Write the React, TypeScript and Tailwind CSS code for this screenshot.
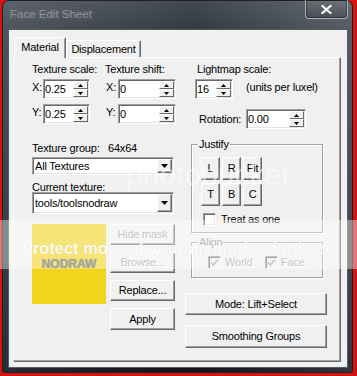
import React from "react";

const raised =
  "border border-t-white border-l-white border-r-[#696969] border-b-[#696969] shadow-[inset_-1px_-1px_0_#a0a0a0] bg-[#f0f0f0]";
const raisedSmall = "border border-t-white border-l-white border-r-[#696969] border-b-[#696969] bg-[#f0f0f0]";
const sunken =
  "border border-t-[#a0a0a0] border-l-[#a0a0a0] border-r-white border-b-white shadow-[inset_1px_1px_0_#696969,inset_-1px_-1px_0_#e3e3e3]";

function Spin({ value, className }: { value: string; className: string }) {
  return (
    <div className={`flex h-[20px] bg-white ${sunken} ${className}`}>
      <div className="flex flex-1 items-center pl-[1px]">{value}</div>
      <div className="my-[1px] mr-[1px] flex w-[15px] flex-col">
        <div className={`flex h-[8px] items-center justify-center ${raisedSmall}`}>
          <svg width="5" height="3" viewBox="0 0 5 3">
            <path d="M2.5 0L5 3H0z" fill="#000" />
          </svg>
        </div>
        <div className={`flex h-[8px] items-center justify-center ${raisedSmall}`}>
          <svg width="5" height="3" viewBox="0 0 5 3">
            <path d="M0 0h5L2.5 3z" fill="#000" />
          </svg>
        </div>
      </div>
    </div>
  );
}

function Combo({ value, className }: { value: string; className: string }) {
  return (
    <div className={`flex w-[142px] bg-white ${sunken} ${className}`}>
      <div className="flex flex-1 items-center pl-[2px]">{value}</div>
      <div className={`my-[1px] mr-[1px] flex w-[15px] items-center justify-center ${raised}`}>
        <svg width="7" height="4" viewBox="0 0 7 4">
          <path d="M0 0h7L3.5 4z" fill="#000" />
        </svg>
      </div>
    </div>
  );
}

function Button({ label, className, disabled }: { label: string; className: string; disabled?: boolean }) {
  return (
    <div
      className={`flex items-center justify-center ${raised} ${className} ${
        disabled ? "text-[#a0a0a0] [text-shadow:1px_1px_0_#fff]" : ""
      }`}
    >
      {label}
    </div>
  );
}

function Check({ checked, disabled }: { checked?: boolean; disabled?: boolean }) {
  return (
    <div
      className={`flex h-[13px] w-[13px] shrink-0 items-center justify-center ${sunken} ${
        disabled ? "bg-[#f0f0f0]" : "bg-white"
      }`}
    >
      {checked && (
        <svg width="9" height="9" viewBox="0 0 9 9">
          <path d="M1 4.5l2.3 2.4L8 1.8" stroke={disabled ? "#a0a0a0" : "#000"} strokeWidth="1.6" fill="none" />
        </svg>
      )}
    </div>
  );
}

export default function App() {
  return (
    <div className="relative h-[376px] w-[357px] overflow-hidden bg-[#d8130f] font-['Liberation_Sans',Arial,sans-serif] text-[11px] leading-[13px] tracking-[-0.2px] text-black">
      {/* window frame */}
      <div className="ml-[2px] flex h-[373px] w-[351px] flex-col rounded-t-[7px] rounded-b-[2px] border border-[#1b2127] bg-[linear-gradient(90deg,rgba(255,255,255,0.1)_0%,rgba(255,255,255,0.02)_30%,rgba(0,0,0,0.12)_55%,rgba(255,255,255,0.14)_100%),linear-gradient(180deg,#4b525a_0%,#3a4149_8%,#2c333b_40%,#1b222a_80%,#0f161d_100%)]">
        <div className="relative h-[28px] shrink-0">
          <div className="pl-[7px] pt-[6px] text-[11.5px] leading-[14px] tracking-normal text-[#8d9399] [text-shadow:0_0_6px_rgba(255,255,255,0.2)]">
            Face Edit Sheet
          </div>
          <div className="absolute right-[4px] top-[-1px] flex h-[19px] w-[43px] items-center justify-center rounded-b-[4px] border border-t-0 border-[#a9b0b6] bg-[linear-gradient(180deg,rgba(255,255,255,0.08),rgba(0,0,0,0.15))] shadow-[inset_0_0_0_1px_rgba(0,0,0,0.35)]">
            <svg width="11" height="9" viewBox="0 0 11 9">
              <path d="M1.5 1l8 7M9.5 1l-8 7" stroke="#f4f6f8" strokeWidth="2.2" strokeLinecap="square" />
            </svg>
          </div>
        </div>

        {/* client area */}
        <div className="ml-[5px] mr-[4px] h-[339px] border border-[#555c63] bg-[#f0f0f0]">
          <div className="flex h-[27px] items-end pl-[5px] pt-[7px]">
            <div className="relative z-10 mb-[-1px] flex h-[21px] w-[52px] items-start justify-center rounded-t-[2px] border border-b-0 border-t-white border-l-white border-r-[#696969] bg-[#f0f0f0] pt-[3px] shadow-[inset_-1px_0_0_#a0a0a0]">
              Material
            </div>
            <div className="flex h-[17px] w-[75px] items-start justify-center rounded-t-[2px] border border-b-0 border-t-white border-l-white border-r-[#696969] bg-[#f0f0f0] pt-[2px] shadow-[inset_-1px_0_0_#a0a0a0]">
              Displacement
            </div>
          </div>

          {/* tab panel */}
          <div className="ml-[4px] flex h-[304px] w-[327px] border border-t-white border-l-white border-r-[#a0a0a0] border-b-[#a0a0a0] shadow-[1px_1px_0_#696969]">
            {/* left column */}
            <div className="ml-[18px] flex w-[144px] flex-col pt-[6px]">
              <div className="flex h-[10px] leading-[10px]">
                <span className="w-[73px]">Texture scale:</span>
                <span>Texture shift:</span>
              </div>
              <div className="mt-[5px] flex">
                <span className="w-[11px] pt-[2px]">X:</span>
                <Spin value="0.25" className="w-[47px]" />
                <span className="ml-[16px] w-[12px] pt-[2px]">X:</span>
                <Spin value="0" className="w-[58px]" />
              </div>
              <div className="mt-[5px] flex">
                <span className="w-[11px] pt-[2px]">Y:</span>
                <Spin value="0.25" className="w-[47px]" />
                <span className="ml-[16px] w-[12px] pt-[2px]">Y:</span>
                <Spin value="0" className="w-[58px]" />
              </div>
              <div className="mt-[19px] flex h-[10px] leading-[10px]">
                <span className="w-[76px]">Texture group:</span>
                <span>64x64</span>
              </div>
              <Combo value="All Textures" className="mt-[4px] h-[18px]" />
              <div className="mt-[7px] h-[10px] leading-[10px]">Current texture:</div>
              <Combo value="tools/toolsnodraw" className="h-[22px]" />
              <div className="mt-[10px] flex">
                <div className="flex h-[80px] w-[74px] items-center justify-center bg-[#f2d31e] text-[12px] font-bold tracking-normal text-[#6f6e66] [text-shadow:0_0_1px_#4a4a40]">
                  NODRAW
                </div>
                <div className="ml-[4px] flex w-[65px] flex-col gap-[7px]">
                  <Button label="Hide mask" className="h-[21px]" disabled />
                  <Button label="Browse..." className="h-[21px]" disabled />
                  <Button label="Replace..." className="h-[21px]" />
                  <Button label="Apply" className="h-[22px]" />
                </div>
              </div>
            </div>

            {/* right column */}
            <div className="ml-[9px] flex w-[142px] flex-col pt-[6px]">
              <div className="ml-[12px] h-[10px] leading-[10px]">Lightmap scale:</div>
              <div className="mt-[5px] flex">
                <Spin value="16" className="ml-[10px] w-[38px]" />
                <span className="ml-[13px] pt-[2px]">(units per luxel)</span>
              </div>
              <div className="mt-[10px] flex">
                <span className="ml-[14px] w-[47px] pt-[4px]">Rotation:</span>
                <Spin value="0.00" className="w-[60px]" />
              </div>

              <div className="relative ml-[6px] mt-[15px] h-[89px] w-[132px] border border-[#a0a0a0] pl-[9px] pt-[12px] shadow-[inset_1px_1px_0_#fff,1px_1px_0_#fff]">
                <span className="absolute left-[6px] top-[-7px] bg-[#f0f0f0] px-[1px]">Justify</span>
                <div className="flex gap-[2px]">
                  <Button label="L" className="h-[23px] w-[19px]" />
                  <Button label="R" className="h-[23px] w-[19px]" />
                  <Button label="Fit" className="h-[23px] w-[19px]" />
                </div>
                <div className="mt-[3px] flex gap-[2px]">
                  <Button label="T" className="h-[23px] w-[19px]" />
                  <Button label="B" className="h-[23px] w-[19px]" />
                  <Button label="C" className="h-[23px] w-[19px]" />
                </div>
                <div className="ml-[2px] mt-[7px] flex items-center">
                  <Check />
                  <span className="ml-[5px]">Treat as one</span>
                </div>
              </div>

              <div className="relative ml-[6px] mt-[9px] h-[36px] w-[132px] border border-[#a0a0a0] pl-[16px] pt-[13px] text-[#a0a0a0] shadow-[inset_1px_1px_0_#fff,1px_1px_0_#fff]">
                <span className="absolute left-[6px] top-[-7px] bg-[#f0f0f0] px-[1px] text-[#8c8c8c]">Align</span>
                <div className="flex items-center [text-shadow:1px_1px_0_#fff]">
                  <div className="flex w-[57px] items-center">
                    <Check checked disabled />
                    <span className="ml-[4px]">World</span>
                  </div>
                  <Check checked disabled />
                  <span className="ml-[3px]">Face</span>
                </div>
              </div>

              <Button label="Mode: Lift+Select" className="mt-[15px] h-[22px] w-[142px]" />
              <Button label="Smoothing Groups" className="mt-[10px] h-[23px] w-[142px]" />
            </div>
          </div>
        </div>
      </div>

      {/* photobucket watermark */}
      <div className="pointer-events-none absolute left-[126px] top-[160px] text-[30px] leading-[30px] tracking-normal text-white/50">
        photobucket
      </div>
      <div className="pointer-events-none absolute left-0 top-[220px] flex h-[49px] w-full justify-center bg-white/40 pt-[18px]">
        <span className="text-[16.5px] font-bold leading-[20px] tracking-normal text-white/90 [text-shadow:0_0_1px_rgba(0,0,0,0.12)]">
          Protect more of your memories for less!
        </span>
      </div>
    </div>
  );
}
